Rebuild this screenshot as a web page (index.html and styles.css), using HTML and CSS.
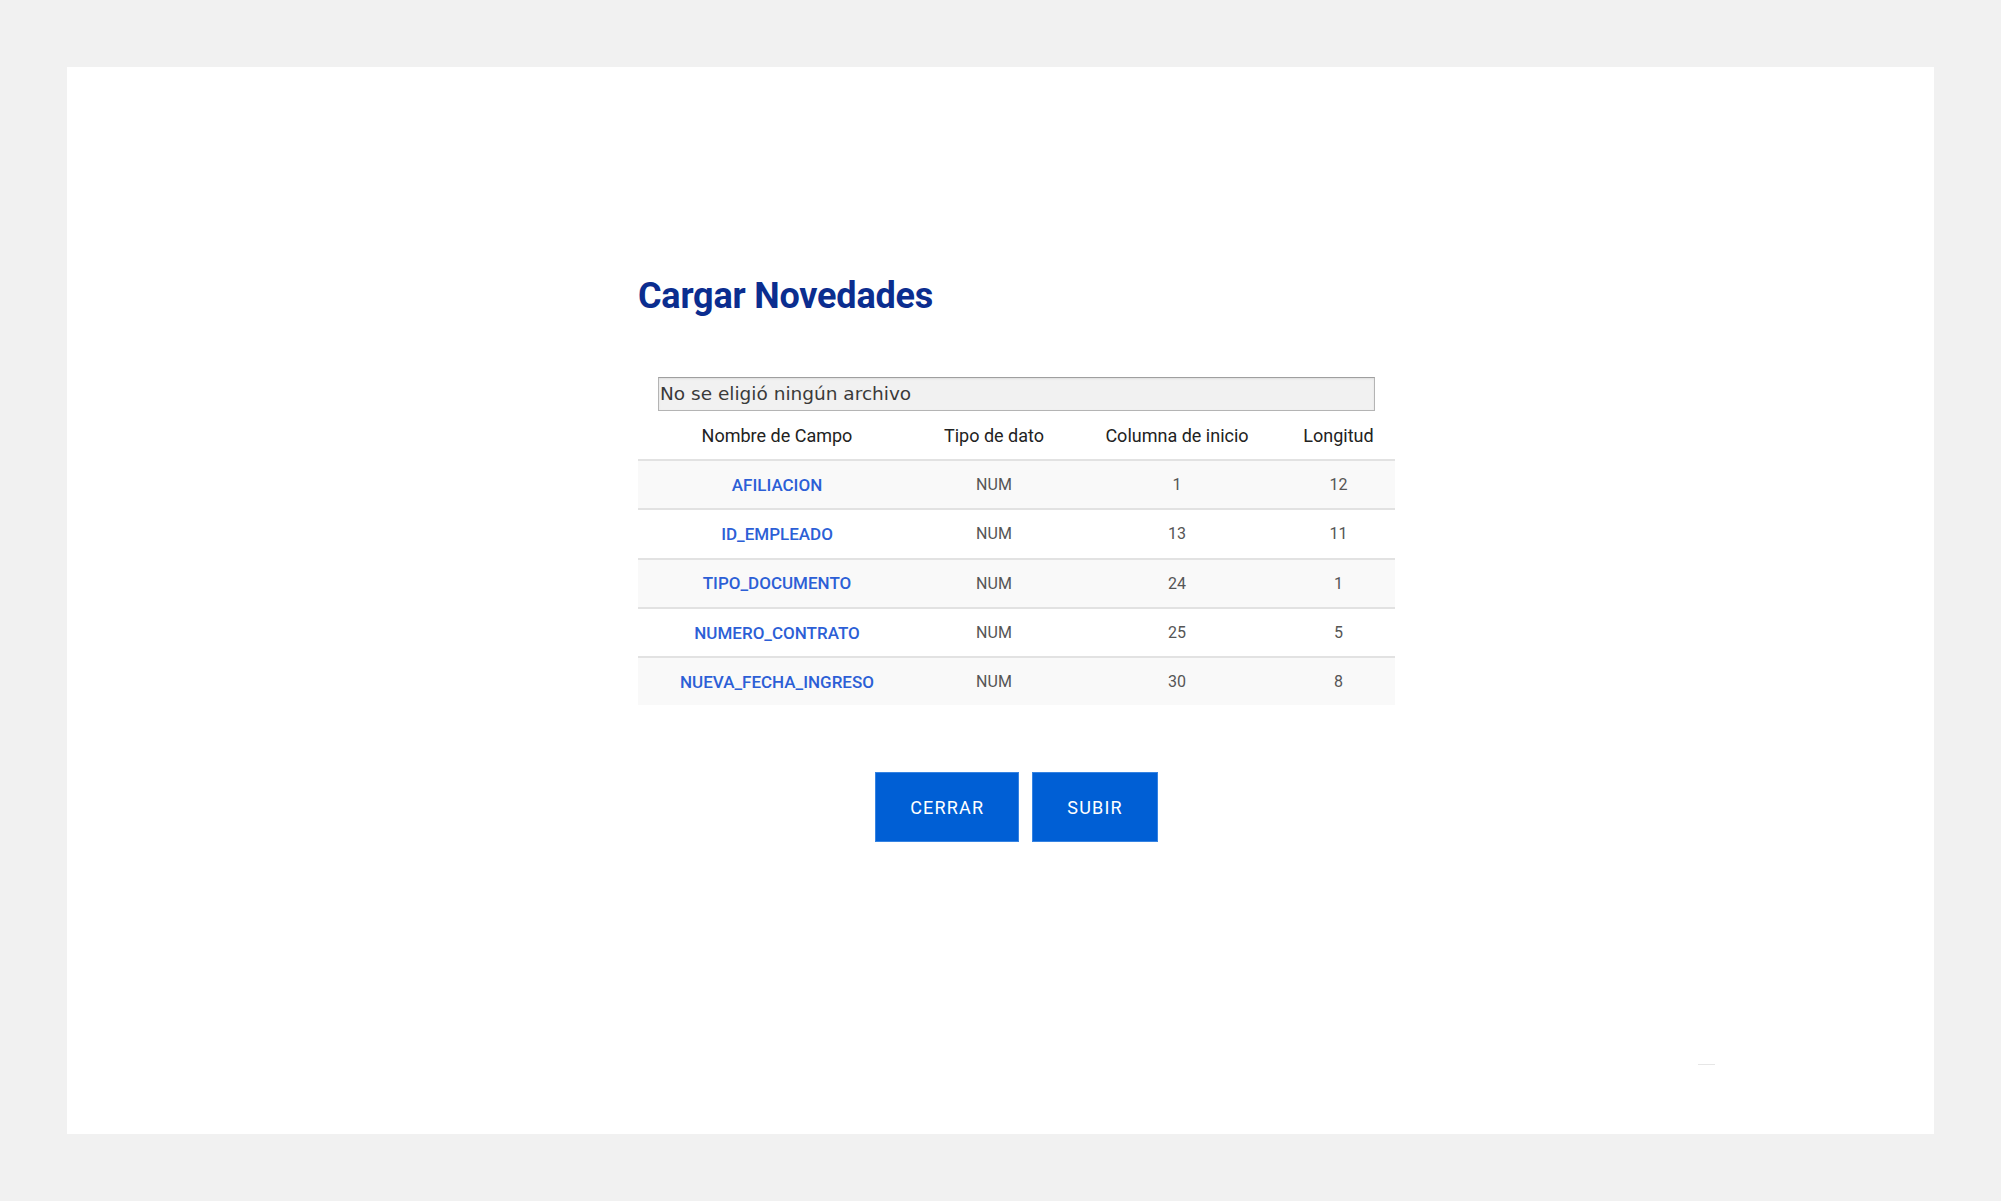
FILE: index.html
```html
<!DOCTYPE html>
<html lang="es">
<head>
<meta charset="utf-8">
<title>Cargar Novedades</title>
<link rel="stylesheet" href="styles.css">
</head>
<body>
<div class="panel">
  <div class="content">
    <h1 class="title">Cargar Novedades</h1>
    <div class="upload">
      <div class="file-box">No se eligió ningún archivo</div>
    </div>
    <table class="fields">
      <colgroup>
        <col class="c1"><col class="c2"><col class="c3"><col class="c4">
      </colgroup>
      <thead>
        <tr><th>Nombre de Campo</th><th>Tipo de dato</th><th>Columna de inicio</th><th>Longitud</th></tr>
      </thead>
      <tbody>
        <tr><td class="name">AFILIACION</td><td>NUM</td><td>1</td><td>12</td></tr>
        <tr><td class="name">ID_EMPLEADO</td><td>NUM</td><td>13</td><td>11</td></tr>
        <tr><td class="name">TIPO_DOCUMENTO</td><td>NUM</td><td>24</td><td>1</td></tr>
        <tr><td class="name">NUMERO_CONTRATO</td><td>NUM</td><td>25</td><td>5</td></tr>
        <tr><td class="name">NUEVA_FECHA_INGRESO</td><td>NUM</td><td>30</td><td>8</td></tr>
      </tbody>
    </table>
    <div class="actions">
      <button class="btn">CERRAR</button>
      <button class="btn">SUBIR</button>
    </div>
  </div>
  <span class="dash"></span>
</div>
</body>
</html>
```
FILE: styles.css
```css
html, body {
  margin: 0;
  padding: 0;
}
body {
  background: #f1f1f1;
  width: 2001px;
  height: 1201px;
  overflow: hidden;
  font-family: Roboto, "Liberation Sans", sans-serif;
}
.panel {
  position: relative;
  box-sizing: border-box;
  margin: 67px 0 0 67px;
  width: 1867px;
  height: 1067px;
  background: #ffffff;
  padding: 207px 0 0 571px;
}
.content {
  width: 757px;
}
.title {
  margin: 0;
  font-family: Roboto, "Liberation Sans", sans-serif;
  font-weight: 700;
  font-size: 36px;
  line-height: 44px;
  color: #0b2d8f;
  letter-spacing: -0.2px;
}
.upload {
  margin-top: 59px;
  padding: 0 20px;
}
.file-box {
  box-sizing: border-box;
  height: 34px;
  border: 1px solid #b4b4b4;
  border-top-color: #9f9f9f;
  background: #f1f1f1;
  box-shadow: inset 0 1px 2px rgba(0,0,0,0.08);
  font-family: "DejaVu Sans", Verdana, sans-serif;
  font-size: 18.5px;
  line-height: 32px;
  color: #3a3a3a;
  padding-left: 1px;
}
.fields {
  width: 757px;
  table-layout: fixed;
  border-collapse: collapse;
}
.fields col.c1 { width: 278px; }
.fields col.c2 { width: 156px; }
.fields col.c3 { width: 210px; }
.fields col.c4 { width: 113px; }
.fields th {
  height: 48px;
  padding: 0;
  font-weight: 400;
  font-size: 18px;
  color: #222;
  text-align: center;
}
.fields td {
  height: 47.3px;
  padding: 0;
  border-top: 2px solid #e2e2e2;
  text-align: center;
  font-size: 16px;
  color: #555;
}
.fields tbody tr:nth-child(odd) td {
  background: #f9f9f9;
}
.fields td.name {
  font-weight: 500;
  font-size: 17px;
  color: #2c5fd6;
}
.actions {
  margin-top: 67px;
  display: flex;
  justify-content: center;
  gap: 13px;
}
.btn {
  height: 70px;
  padding: 0 34px;
  border: 1px solid #3583e2;
  background: #005fd5;
  color: #ffffff;
  font-family: Roboto, "Liberation Sans", sans-serif;
  font-size: 18px;
  font-weight: 400;
  letter-spacing: 1.2px;
  cursor: pointer;
}
.dash {
  position: absolute;
  left: 1631px;
  top: 997px;
  width: 17px;
  height: 1px;
  background: #e6e6e6;
}
```
